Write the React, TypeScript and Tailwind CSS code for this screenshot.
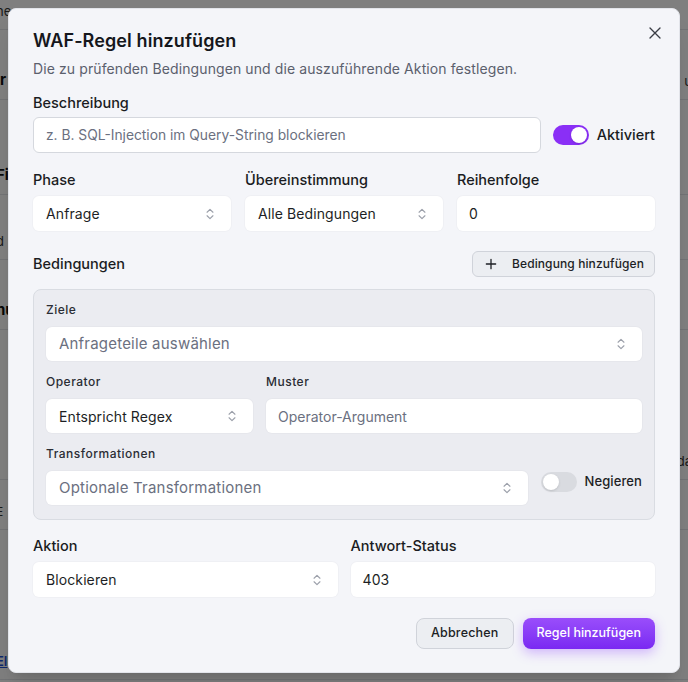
import React from "react";

function Chevrons() {
  return (
    <svg viewBox="0 0 24 24" className="h-3.5 w-3.5 text-[#9ca0aa]" fill="none" stroke="currentColor" strokeWidth="2" strokeLinecap="round" strokeLinejoin="round" aria-hidden="true">
      <path d="M7 9l5-5 5 5" />
      <path d="M7 15l5 5 5-5" />
    </svg>
  );
}

function Select({ value, placeholder, h = "h-[35px]" }: { value?: string; placeholder?: string; h?: string }) {
  return (
    <div className={`flex ${h} w-full items-center justify-between rounded-md bg-white pl-[13px] pr-3.5 shadow-[0_0_0_1px_rgba(0,0,0,0.02)]`}>
      <span className={value ? "text-[14px] tracking-[0.1px] text-[#1d1f25]" : "text-[15px] tracking-[0.2px] text-[#6b7080]"}>{value ?? placeholder}</span>
      <Chevrons />
    </div>
  );
}

function Field({ value, placeholder, h = "h-[35px]" }: { value?: string; placeholder?: string; h?: string }) {
  return (
    <div className={`flex ${h} w-full items-center rounded-md bg-white px-3 shadow-[0_0_0_1px_rgba(0,0,0,0.02)]`}>
      <span className={value ? "text-[14px] tracking-[0.1px] text-[#1d1f25]" : "text-[14px] text-[#6b7080]"}>{value ?? placeholder}</span>
    </div>
  );
}

function Toggle({ on }: { on: boolean }) {
  return (
    <div className={on ? "flex h-5 w-9 items-center justify-end rounded-full bg-[#8a2ff6] px-0.5" : "flex h-5 w-9 items-center rounded-full bg-[#d9dbe0] px-0.5"}>
      <div className="h-4 w-4 rounded-full bg-white shadow-sm" />
    </div>
  );
}

const bgRows = [
  { y: "h-[30px]", t: "ne", c: "text-[13px] text-[#333]", r: "" },
  { y: "h-[70px]", t: "ir", c: "text-[15px] font-bold text-[#111]", r: "u" },
  { y: "h-[95px]", t: "Fi", c: "text-[15px] font-bold text-[#111]", r: "" },
  { y: "h-[65px]", t: "d", c: "text-[13px] text-[#333]", r: "" },
  { y: "h-[70px]", t: "nu", c: "text-[15px] font-bold text-[#111]", r: "" },
  { y: "h-[150px]", t: "", c: "text-[12px] text-[#333]", r: "da" },
  { y: "h-[50px]", t: "E", c: "text-[12px] text-[#333]", r: "" },
  { y: "h-[150px]", t: "EI", c: "text-[13px] font-semibold text-[#1d4ed8] underline", r: "" },
];

const label = "text-[14.5px] leading-5 font-medium text-[#1a1c22]";
const small = "text-[12px] leading-4 font-medium tracking-[0.5px] text-[#2a2d34]";

export default function App() {
  return (
    <div className="relative h-[682px] w-[688px] overflow-hidden bg-white font-['Inter',sans-serif]">
      <div className="flex flex-col">
        {bgRows.map((r, i) => (
          <div key={i} className={`${r.y} flex items-end justify-between border-b border-[#e5e7eb] pb-2`}>
            <span className={`-ml-1 ${r.c}`}>{r.t}</span>
            <span className="-mr-1 text-[13px] text-[#333]">{r.r}</span>
          </div>
        ))}
      </div>
      <div className="absolute inset-0 bg-black/50" />

      <div
        className="absolute left-2 top-2 flex h-[665px] w-[672px] flex-col rounded-lg border border-[#e2e4ea] bg-[#f4f5f9] px-6 pt-[18px] shadow-xl"
        role="dialog"
        aria-modal="true"
      >
        <button type="button" className="absolute right-[14px] top-[14px] text-[#3a3d45]" aria-label="Schließen">
          <svg viewBox="0 0 24 24" className="h-5 w-5" fill="none" stroke="currentColor" strokeWidth="1.6" strokeLinecap="round">
            <path d="M18 6L6 18M6 6l12 12" />
          </svg>
        </button>

        <h2 className="text-[18px] leading-7 font-semibold tracking-[0.1px] text-[#15171c]">WAF-Regel hinzufügen</h2>
        <p className="mt-1 text-[14px] leading-5 tracking-[0.1px] text-[#5b606d]">
          Die zu prüfenden Bedingungen und die auszuführende Aktion festlegen.
        </p>

        <label className={`mt-[14px] ${label}`}>Beschreibung</label>
        <div className="mt-[4px] flex items-center gap-3">
          <div className="flex h-9 flex-1 items-center rounded-md border border-[#d5d8de] bg-white px-3">
            <span className="text-[13.8px] text-[#6b7080]">z. B. SQL-Injection im Query-String blockieren</span>
          </div>
          <div className="flex items-center gap-2">
            <Toggle on />
            <span className="text-[14.5px] font-medium text-[#1a1c22]">Aktiviert</span>
          </div>
        </div>

        <div className="mt-[17px] grid grid-cols-3 gap-3.5">
          <div className="flex flex-col gap-[6px]">
            <span className={label}>Phase</span>
            <Select value="Anfrage" />
          </div>
          <div className="flex flex-col gap-[6px]">
            <span className={label}>Übereinstimmung</span>
            <Select value="Alle Bedingungen" />
          </div>
          <div className="flex flex-col gap-[6px]">
            <span className={label}>Reihenfolge</span>
            <Field value="0" />
          </div>
        </div>

        <div className="mt-5 flex items-center justify-between">
          <span className="text-[14.5px] font-medium text-[#1a1c22]">Bedingungen</span>
          <button
            type="button"
            className="flex h-[26px] items-center gap-[14px] rounded-md border border-[#d0d3da] bg-[#eceef2] pl-[11px] pr-[10px] text-[12px] font-medium tracking-[0.1px] text-[#1d1f25]"
          >
            <svg viewBox="0 0 24 24" className="h-3.5 w-3.5" fill="none" stroke="currentColor" strokeWidth="2.2" strokeLinecap="round">
              <path d="M12 4v16M4 12h16" />
            </svg>
            Bedingung hinzufügen
          </button>
        </div>

        <div className="mt-3 flex flex-col rounded-lg border border-[#d9dce2] bg-[#ebecf1] px-3 pt-[12px] pb-[14px]">
          <span className={small}>Ziele</span>
          <div className="mt-[9px]">
            <Select placeholder="Anfrageteile auswählen" h="h-[34px]" />
          </div>

          <div className="mt-[13px] flex gap-[13px]">
            <div className="flex w-[207px] flex-col gap-[9px]">
              <span className={small}>Operator</span>
              <Select value="Entspricht Regex" h="h-[34px]" />
            </div>
            <div className="flex flex-1 flex-col gap-[9px]">
              <span className={small}>Muster</span>
              <Field placeholder="Operator-Argument" h="h-[34px]" />
            </div>
          </div>

          <span className={`mt-[13px] ${small}`}>Transformationen</span>
          <div className="mt-[9px] flex items-start gap-[13px]">
            <div className="flex-1">
              <Select placeholder="Optionale Transformationen" h="h-[34px]" />
            </div>
            <div className="flex items-center gap-2 pt-px">
              <Toggle on={false} />
              <span className="text-[13px] font-medium tracking-[0.1px] text-[#1d1f25]">Negieren</span>
            </div>
          </div>
        </div>

        <div className="mt-4 grid grid-cols-2 gap-[13px]">
          <div className="flex flex-col gap-[6px]">
            <span className={label}>Aktion</span>
            <Select value="Blockieren" />
          </div>
          <div className="flex flex-col gap-[6px]">
            <span className={label}>Antwort-Status</span>
            <Field value="403" />
          </div>
        </div>

        <div className="mt-[21px] flex justify-end gap-[9px]">
          <button
            type="button"
            className="h-[31px] rounded-lg border border-[#d0d3da] bg-[#eceef2] px-[14px] text-[12.5px] font-medium tracking-[0.2px] text-[#1d1f25]"
          >
            Abbrechen
          </button>
          <button
            type="button"
            className="h-[31px] rounded-lg bg-gradient-to-b from-[#9a4dfb] to-[#7a28f2] px-[14px] text-[12.5px] font-medium text-white shadow-[0_4px_12px_rgba(139,61,255,0.35)]"
          >
            Regel hinzufügen
          </button>
        </div>
      </div>
    </div>
  );
}
